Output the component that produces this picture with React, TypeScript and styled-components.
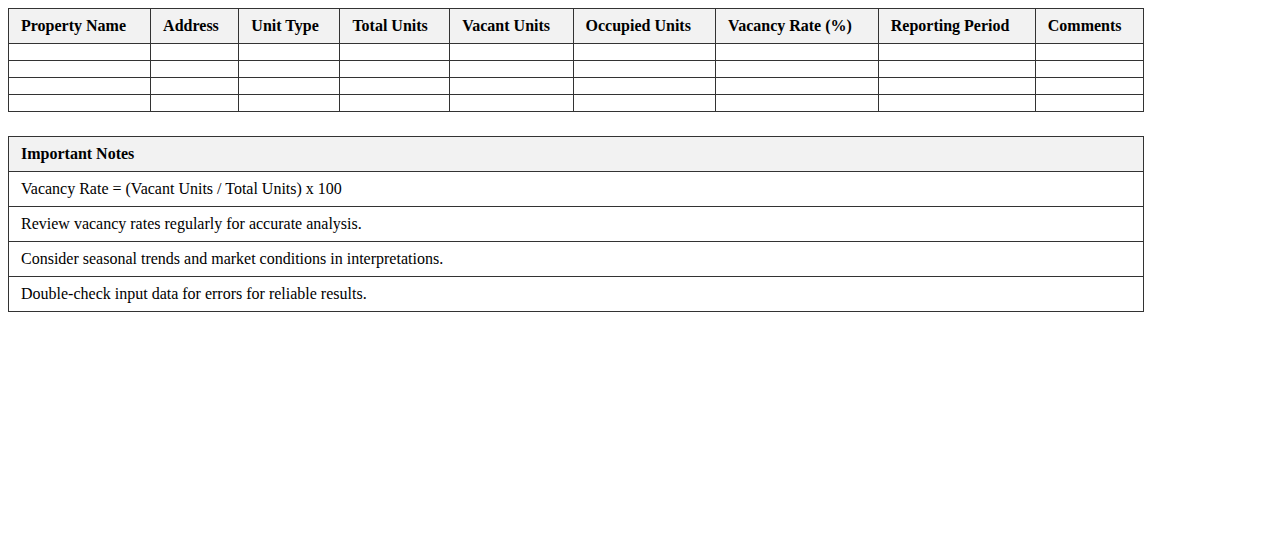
import React from "react";
import styled, { createGlobalStyle } from "styled-components";

const Global = createGlobalStyle`
  body {
    margin: 8px;
    font-family: "Liberation Serif", "Times New Roman", serif;
    font-size: 16px;
    color: #000;
    background: #fff;
  }
`;

const Table = styled.table<{ $gap?: number }>`
  width: 90%;
  border-collapse: collapse;
  margin-bottom: ${(p) => p.$gap ?? 0}px;
`;

const Th = styled.th`
  border: 1px solid #333;
  padding: 8px 12px;
  text-align: left;
  background: #f2f2f2;
  font-weight: bold;
`;

const Td = styled.td`
  border: 1px solid #333;
  padding: 8px 12px;
  text-align: left;
`;

const headers = [
  "Property Name",
  "Address",
  "Unit Type",
  "Total Units",
  "Vacant Units",
  "Occupied Units",
  "Vacancy Rate (%)",
  "Reporting Period",
  "Comments",
];

const notes = [
  "Vacancy Rate = (Vacant Units / Total Units) x 100",
  "Review vacancy rates regularly for accurate analysis.",
  "Consider seasonal trends and market conditions in interpretations.",
  "Double-check input data for errors for reliable results.",
];

export default function App() {
  return (
    <>
      <Global />
      <Table $gap={24}>
        <thead>
          <tr>
            {headers.map((h) => (
              <Th key={h}>{h}</Th>
            ))}
          </tr>
        </thead>
        <tbody>
          {[0, 1, 2, 3].map((r) => (
            <tr key={r}>
              {headers.map((h) => (
                <Td key={h}></Td>
              ))}
            </tr>
          ))}
        </tbody>
      </Table>
      <Table>
        <thead>
          <tr>
            <Th>Important Notes</Th>
          </tr>
        </thead>
        <tbody>
          {notes.map((n) => (
            <tr key={n}>
              <Td>{n}</Td>
            </tr>
          ))}
        </tbody>
      </Table>
    </>
  );
}
